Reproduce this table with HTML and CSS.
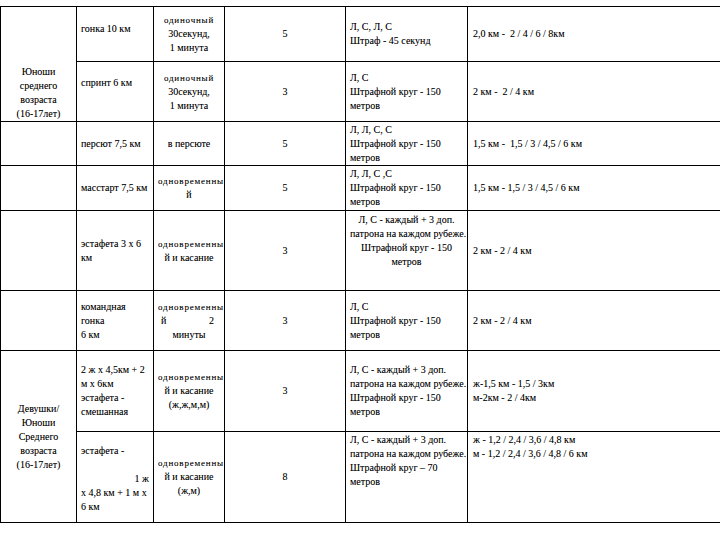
FILE: index.html
```html
<!DOCTYPE html>
<html lang="ru">
<head>
<meta charset="utf-8">
<title>Таблица соревнований</title>
<link rel="stylesheet" href="styles.css">
</head>
<body>
<table class="grid">
  <colgroup>
    <col class="c1"><col class="c2"><col class="c3"><col class="c4"><col class="c5"><col class="c6">
  </colgroup>
  <tbody>
    <tr class="r1">
      <td class="group bottom" rowspan="2">Юноши<br>среднего<br>возраста<br>(16-17лет)</td>
      <td class="txt lift1">гонка 10 км</td>
      <td class="mid"><span class="wide">одиночный</span><br>30секунд,<br>1 минута</td>
      <td class="num">5</td>
      <td class="txt">Л, С, Л, С<br>Штраф - 45 секунд</td>
      <td class="dist">2,0 км -&nbsp; 2 / 4 / 6 / 8км</td>
    </tr>
    <tr class="r2">
      <td class="txt lift2">спринт 6 км</td>
      <td class="mid"><span class="wide">одиночный</span><br>30секунд,<br>1 минута</td>
      <td class="num">3</td>
      <td class="txt">Л, С<br>Штрафной круг - 150<br>метров</td>
      <td class="dist">2 км -&nbsp; 2 / 4 км</td>
    </tr>
    <tr class="r3">
      <td class="group"></td>
      <td class="txt">персют 7,5 км</td>
      <td class="mid">в персюте</td>
      <td class="num">5</td>
      <td class="txt">Л, Л, С, С<br>Штрафной круг - 150<br>метров</td>
      <td class="dist">1,5 км -&nbsp; 1,5 / 3 / 4,5 / 6 км</td>
    </tr>
    <tr class="r4">
      <td class="group"></td>
      <td class="txt">масстарт 7,5 км</td>
      <td class="mid"><span class="wide">одновременны</span><br>й</td>
      <td class="num">5</td>
      <td class="txt">Л, Л, С ,С<br>Штрафной круг - 150<br>метров</td>
      <td class="dist">1,5 км - 1,5 / 3 / 4,5 / 6 км</td>
    </tr>
    <tr class="r5">
      <td class="group"></td>
      <td class="txt">эстафета 3 х 6<br>км</td>
      <td class="mid"><span class="wide">одновременны</span><br>й и касание</td>
      <td class="num">3</td>
      <td class="txt center top">Л, С - каждый + 3 доп.<br>патрона на каждом рубеже.<br>Штрафной круг - 150<br>метров</td>
      <td class="dist">2 км - 2 / 4 км</td>
    </tr>
    <tr class="r6">
      <td class="group"></td>
      <td class="txt">командная<br>гонка<br>6 км</td>
      <td class="mid"><span class="wide">одновременны</span><br><span class="split"><span>й</span><span>2</span></span>минуты</td>
      <td class="num">3</td>
      <td class="txt">Л, С<br>Штрафной круг - 150<br>метров</td>
      <td class="dist">2 км - 2 / 4 км</td>
    </tr>
    <tr class="r7">
      <td class="group" rowspan="2">Девушки/<br>Юноши<br>Среднего<br>возраста<br>(16-17лет)</td>
      <td class="txt">2 ж х 4,5км + 2<br>м х 6км<br>эстафета -<br>смешанная</td>
      <td class="mid"><span class="wide">одновременны</span><br>й и касание<br>(ж,ж,м,м)</td>
      <td class="num">3</td>
      <td class="txt">Л, С - каждый + 3 доп.<br>патрона на каждом рубеже.<br>Штрафной круг - 150<br>метров</td>
      <td class="dist">ж-1,5 км - 1,5 / 3км<br>м-2км - 2 / 4км</td>
    </tr>
    <tr class="r8">
      <td class="txt nudge">
        <div>эстафета -</div>
        <div>&nbsp;</div>
        <div class="right">1 ж</div>
        <div>х 4,8 км + 1 м х</div>
        <div>6 км</div>
      </td>
      <td class="mid"><span class="wide">одновременны</span><br>й и касание<br>(ж,м)</td>
      <td class="num">8</td>
      <td class="txt top">Л, С - каждый + 3 доп.<br>патрона на каждом рубеже.<br>Штрафной круг – 70<br>метров</td>
      <td class="dist top">ж - 1,2 / 2,4 / 3,6 / 4,8 км<br>м - 1,2 / 2,4 / 3,6 / 4,8 / 6 км</td>
    </tr>
  </tbody>
</table>
</body>
</html>
```

FILE: styles.css
```css
html, body {
  margin: 0;
  padding: 0;
  overflow: hidden;
  background: #fff;
}

body {
  font-family: "Liberation Serif", Tinos, "Times New Roman", "DejaVu Serif", serif;
  font-size: 10px;
  line-height: 14px;
  color: #000;
  padding-top: 6px;
}

.grid {
  border-collapse: collapse;
  table-layout: fixed;
  width: 720px;
  text-shadow: 0 0 0.3px rgba(0, 0, 0, 0.3);
}

.c1 { width: 76px; }
.c2 { width: 77px; }
.c3 { width: 71px; }
.c4 { width: 121px; }
.c5 { width: 122px; }
.c6 { width: 253px; }

.grid td {
  border: 1px solid #000;
  padding: 0 4px;
  vertical-align: middle;
  white-space: nowrap;
  overflow: visible;
}

.grid td.dist {
  border-right: none;
  padding-left: 5px;
}

.r1 { height: 55px; }
.r2 { height: 60px; }
.r3 { height: 44px; }
.r4 { height: 45px; }
.r5 { height: 80px; }
.r6 { height: 60px; }
.r7 { height: 81px; }
.r8 { height: 91px; }

.group {
  text-align: center;
}

.grid td.bottom {
  vertical-align: bottom;
  padding-bottom: 0;
}

.grid td.top {
  vertical-align: top;
  padding-top: 1px;
}

.grid td.lift1 { padding-bottom: 10px; }
.grid td.lift2 { padding-bottom: 18px; }
.grid td.nudge { padding-top: 4px; }

.mid {
  text-align: center;
}

.wide {
  font-size: 9px;
  letter-spacing: 0.8px;
}

.split {
  display: flex;
  justify-content: space-between;
  padding: 0 6px 0 3px;
}

.num {
  text-align: center;
}

.center {
  text-align: center;
}

.grid td.center.top { padding-top: 2px; }

.right {
  text-align: right;
}
```
